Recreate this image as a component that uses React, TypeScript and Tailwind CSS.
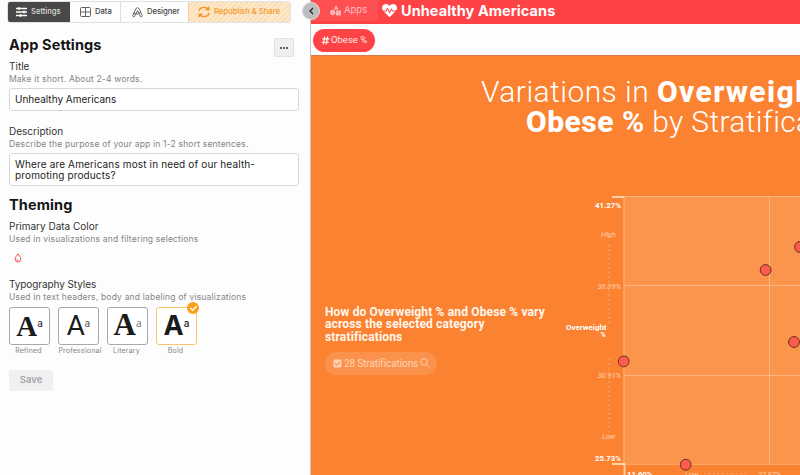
import type { ReactNode } from "react";
import { FaHeartbeat, FaHashtag, FaCheckSquare, FaCheck } from "react-icons/fa";

function Tab({ className, children }: { className: string; children: ReactNode }) {
  return <button className={"flex h-full shrink-0 items-center text-[7.7px] font-medium tracking-[-0.04px] whitespace-nowrap " + className}>{children}</button>;
}

function Label({ children, className }: { children: ReactNode; className: string }) {
  return <div className={"h-[13px] text-[10px] leading-[13px] whitespace-nowrap text-[#333] " + className}>{children}</div>;
}

function Help({ children }: { children: ReactNode }) {
  return <div className="h-[12px] text-[8.5px] leading-[12px] tracking-[0.19px] whitespace-nowrap text-[#858585]">{children}</div>;
}

function StyleOption({ name, big, small, selected, nameClass }: { name: string; big: string; small: string; selected?: boolean; nameClass: string }) {
  return (
    <div className="relative flex w-[41px] flex-col items-center">
      <div className={"flex h-[38px] w-full justify-center rounded-[3px] border bg-white text-[#1b1b1b] " + (selected ? "border-[#fcc273]" : "border-[#a9a9a9]")}>
        <span className={"h-[36px] " + big}>A</span>
        <span className={"h-[30px] " + small}>a</span>
      </div>
      <div className={"h-[12px] text-[7px] leading-[12px] tracking-[0.2px] whitespace-nowrap text-[#858585] " + nameClass}>{name}</div>
      {selected && (
        <span className="absolute -top-[5px] -right-[2px] flex size-[12px] items-center justify-center rounded-full bg-[#f9a11b] text-white">
          <FaCheck size={7} />
        </span>
      )}
    </div>
  );
}

function Settings() {
  return (
    <aside className="flex h-full w-[310px] shrink-0 flex-col bg-[#fdfdfd] font-['Inter',sans-serif]">
      <nav className="mt-px ml-[7px] flex h-[22px] w-[284px] overflow-hidden rounded-[3px] border border-[#e2e2e2] text-[#444]">
        <Tab className="w-[62px] bg-[#484848] pl-[8px] text-[#ddd]">
          <svg width="11" height="10" viewBox="0 0 11 10" className="mr-[4px]" stroke="#fff" strokeWidth="1.4">
            <path d="M0 1.5h11M0 5h11M0 8.5h11M3 0v3M8 3.5v3M4.5 7v3" />
          </svg>
          Settings
        </Tab>
        <Tab className="w-[51px] border-r border-[#dedede] pl-[10px]">
          <svg width="11" height="10" viewBox="0 0 11 10" className="mr-[4px]" fill="none" stroke="#666" strokeWidth="1">
            <rect x=".5" y=".5" width="10" height="9" rx="1" />
            <path d="M5.5 .5v9M.5 5h10" />
          </svg>
          Data
        </Tab>
        <Tab className="w-[67px] pl-[11px]">
          <svg width="11" height="11" viewBox="0 0 11 11" className="mr-[4px]" fill="none" stroke="#666" strokeWidth="1">
            <path d="M3.800 1.800Q5.500 -.6 7.200 1.800L10.300 8.800 9.300 10 8 8.800 5.500 3.500 3 8.800 1.700 10 .7 8.800ZM.8 6.200Q5.500 8.500 8.800 5.200" />
          </svg>
          Designer
        </Tab>
        <Tab className="flex-1 border-l border-[#f2d3a4] bg-[repeating-linear-gradient(135deg,#fde7c6_0px,#fde7c6_2.8px,#f4d5ac_2.8px,#f4d5ac_3.5px)] pl-[9px] text-[#f49a2c]">
          <svg width="12" height="12" viewBox="0 0 12 12" className="mr-[4px] shrink-0" fill="none" stroke="#f49521" strokeWidth="1.4">
            <path d="M1 5C1.500 1 8 0 10.500 3.500M10.800 .8v3H7.800M11 7C10.500 11 4 12 1.500 8.500M1.200 11.200v-3H4.200" />
          </svg>
          Republish &amp; Share
        </Tab>
      </nav>

      <div className="flex flex-col pl-[9px]">
        <div className="mt-[12px] flex h-[22px] justify-between pr-[16px]">
          <h1 className="h-[20px] text-[14.5px] leading-[20px] font-bold tracking-[0.13px] text-[#151515]">App Settings</h1>
          <button className="mt-[3px] flex h-[19px] w-[20px] items-center justify-center gap-px rounded-[2px] border border-[#e4e2e4] bg-[#f0eef0]">
            <i className="size-[2px] rounded-full bg-[#333]" />
            <i className="size-[2px] rounded-full bg-[#333]" />
            <i className="size-[2px] rounded-full bg-[#333]" />
          </button>
        </div>
        <Label className="mt-[3px]">Title</Label>
        <Help>Make it short. About 2-4 words.</Help>
        <div className="mt-[3px] flex h-[23px] w-[290px] items-center rounded-[3px] border border-[#d8d8d8] bg-white pl-[5px] text-[10px] text-[#222]">Unhealthy Americans</div>
        <Label className="mt-[14px]">Description</Label>
        <Help>Describe the purpose of your app in 1-2 short sentences.</Help>
        <div className="mt-[3px] h-[33px] w-[290px] rounded-[3px] border border-[#d8d8d8] bg-white pt-[5px] pl-[5px] text-[10px] leading-[11px] tracking-[0.14px] text-[#222]">
          Where are Americans most in need of our health-
          <br />
          promoting products?
        </div>
        <h2 className="mt-[9px] h-[20px] text-[14.5px] leading-[20px] font-bold tracking-[0.1px] text-[#151515]">Theming</h2>
        <Label className="mt-[5px]">Primary Data Color</Label>
        <Help>Used in visualizations and filtering selections</Help>
        <svg width="8" height="10" viewBox="0 0 8 10" className="mt-[8px] ml-[5px]" fill="none" stroke="#ee5350" strokeWidth="1">
          <path d="M4 .8C3 2.600 1.200 4 1.200 6.200a2.800 2.800 0 0 0 5.600 0C6.800 4 5 2.600 4 .8ZM2.800 6.200Q3 7.600 4.400 7.600" />
        </svg>
        <Label className="mt-[15px] tracking-[-0.08px]">Typography Styles</Label>
        <Help>Used in text headers, body and labeling of visualizations</Help>
        <div className="mt-[4px] flex gap-[8px]">
          <StyleOption name="Refined" nameClass="pr-[2px]" big="font-['Liberation_Serif',serif] text-[29px] leading-[36px] font-bold" small="text-[10px] leading-[31px]" />
          <StyleOption name="Professional" nameClass="ml-[3px]" big="font-['Lato',sans-serif] text-[26px] leading-[35px]" small="text-[10px] leading-[30px] text-[#555]" />
          <StyleOption name="Literary" nameClass="pr-[2px]" big="font-['Liberation_Serif',serif] text-[31px] leading-[34px] font-bold" small="font-['Open_Sans',sans-serif] text-[10px] leading-[31px] text-[#666]" />
          <StyleOption name="Bold" nameClass="pr-[2px]" selected big="font-['Inter',sans-serif] text-[27px] leading-[35px] font-bold" small="text-[10px] leading-[30px] font-medium" />
        </div>
        <button className="mt-[13px] h-[21px] w-[44px] rounded-[2px] bg-[#f0eff1] text-[9.5px] font-semibold text-[#a5a5a5]">Save</button>
      </div>
    </aside>
  );
}

const dots = [
  [240, 62],
  [205.6, 85],
  [234, 157],
  [63.7, 176.4],
  [125.7, 279.7],
];

function Chart() {
  return (
    <svg className="absolute top-[185px] left-[560px]" width="240" height="290" viewBox="0 0 240 290" fontFamily="Roboto, sans-serif" fontSize="7.8">
      <rect x="63.5" y="11" width="177" height="268" fill="#fa954b" />
      <g stroke="#fcb583" strokeWidth="1">
        <path d="M63.5 11.500H240M64 11v268M209.500 11v268M64 100.500H240M64 190.500H240" />
        <path d="M64 279.500H240" strokeWidth=".7" />
      </g>
      <path d="M52 12h12M52 279h12.500v11" fill="none" stroke="#fdd3a8" strokeWidth="1.8" />
      <path d="M49 60v78M49 174v78M144 288.500h45" stroke="#fcb27e" strokeWidth="1" strokeDasharray="1.5 3" fill="none" />
      <g fill="#fff" fontWeight="700">
        <text x="35" y="23.3" textLength="26">41.27%</text>
        <text x="35" y="275.8" textLength="26">25.73%</text>
        <text x="67" y="291.5" textLength="25.500">11.60%</text>
        <text x="6" y="144.5" textLength="40.500">Overweight</text>
        <text x="40.5" y="151.5" fontSize="7">%</text>
      </g>
      <g fill="#fdcfaa" fontStyle="italic">
        <text x="41" y="52" textLength="15">High</text>
        <text x="37.5" y="103.7" textLength="23.500">36.09%</text>
        <text x="37.5" y="193.3" textLength="23.500">30.91%</text>
        <text x="42" y="253.7" textLength="13.500">Low</text>
        <text x="125" y="291.5" textLength="13.500">Low</text>
        <text x="198" y="291.5" textLength="23">22.87%</text>
      </g>
      {dots.map(([x, y]) => (
        <circle key={x} cx={x} cy={y} r="5.4" fill="#fd5b4d" stroke="#693025" strokeWidth="1" />
      ))}
    </svg>
  );
}

function Preview() {
  return (
    <main className="flex h-full min-w-0 flex-1 flex-col overflow-hidden border-l border-[#c8c8c8] bg-[#fb8231]">
      <header className="flex h-[24px] shrink-0 bg-[#fe4346] font-['Inter',sans-serif] text-white">
        <div className="flex h-[21px] w-[67px] items-center rounded-b-[3px] bg-[#fe5053] pl-[19px] text-[9.5px] text-[#ffbfc0]">
          <svg width="11" height="11" viewBox="0 0 11 11" className="mr-[3px]" fill="#ffb3b4">
            <path d="M6 0 8.500 4.500H3.800Z" />
            <circle cx="2.700" cy="7.500" r="2.700" />
            <rect x="6" y="5.500" width="5" height="5" rx=".5" />
          </svg>
          Apps
        </div>
        <FaHeartbeat size={15} className="mt-[3px] ml-[4px]" />
        <h1 className="ml-[4px] text-[14.5px] leading-[21px] font-bold tracking-[0.06px] whitespace-nowrap">Unhealthy Americans</h1>
      </header>
      <div className="flex h-[32px] shrink-0 border-b border-[#d77a45] bg-[#fdfdfd] pt-[5px] pl-[2px]">
        <div className="flex h-[23px] w-[62px] items-center rounded-full bg-[#fe4346] pl-[8px] font-['Roboto',sans-serif] text-[9.5px] whitespace-nowrap text-[#ffe9e9]">
          <FaHashtag size={9} className="mr-[1px] text-white" />
          Obese %
        </div>
      </div>
      <h2 className="mt-[21px] ml-[170px] flex w-[420px] flex-col font-['Roboto',sans-serif] text-[30px] leading-[30px] whitespace-nowrap text-white">
        <span className="font-light tracking-[0.45px]">Variations in <b className="font-extrabold tracking-[1.4px]">Overweight % and</b></span>
        <span className="pl-[45px] font-light tracking-[0.35px]"><b className="font-extrabold tracking-[0.5px]">Obese </b><b className="font-bold">%</b> by Stratifications</span>
      </h2>
      <section className="mt-[169px] ml-[14px] font-['Roboto',sans-serif]">
        <h3 className="text-[12px] leading-[12.3px] font-bold tracking-[0.15px] whitespace-nowrap text-[#fff7ee]">
          How do Overweight % and Obese % vary
          <br />
          across the selected category
          <br />
          stratifications
        </h3>
        <div className="mt-[9px] flex h-[23px] w-[112px] items-center rounded-full bg-[#fb924c] pl-[8px] text-[10px] tracking-[-0.1px] whitespace-nowrap text-[#fed3b4]">
          <FaCheckSquare size={9} className="mr-[2px]" />
          28 Stratifications
          <svg width="10" height="10" viewBox="0 0 10 10" className="ml-[2px]" fill="none" stroke="#fed3b4" strokeWidth="1">
            <circle cx="4" cy="4" r="3.300" />
            <path d="m6.400 6.400 3 3" />
          </svg>
        </div>
      </section>
    </main>
  );
}

export default function App() {
  return (
    <div className="relative flex h-[475px] w-[800px] overflow-hidden bg-[#fdfdfd]">
      <Settings />
      <Preview />
      <Chart />
      <button className="absolute top-[2px] left-[302px] flex size-[18px] items-center justify-center rounded-full border border-[#dcdcdc] bg-[#bdbdbd]">
        <svg width="5" height="8" viewBox="0 0 5 8" fill="none" stroke="#222" strokeWidth="1.300">
          <path d="M4 1 1 4l3 3" />
        </svg>
      </button>
    </div>
  );
}
